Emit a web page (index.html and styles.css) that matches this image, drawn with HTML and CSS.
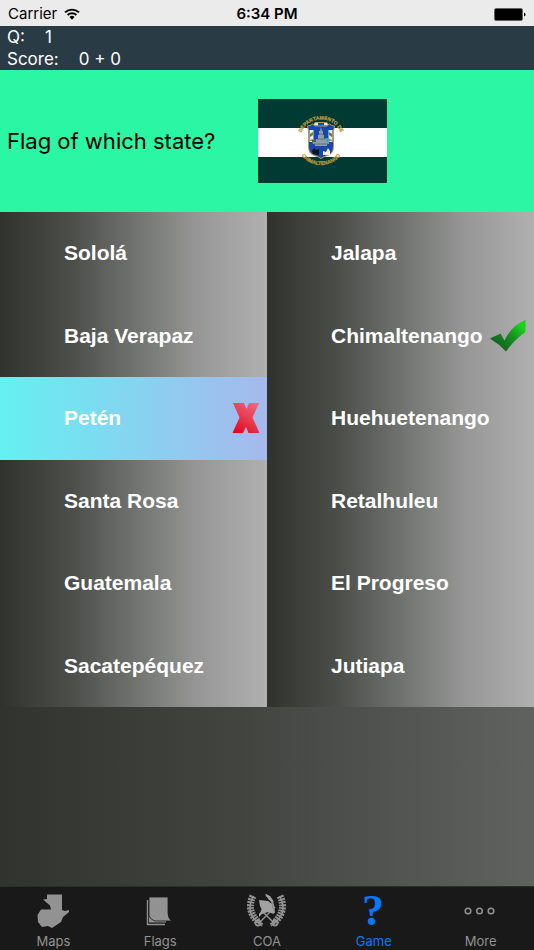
FILE: index.html
```html
<!DOCTYPE html>
<html lang="en">
<head>
<meta charset="utf-8">
<meta name="viewport" content="width=device-width, initial-scale=1">
<title>Flag Game</title>
<link rel="stylesheet" href="styles.css">
</head>
<body>
<div class="app">
  <header class="status">
    <div class="carrier">
      <span>Carrier</span>
      <svg class="wifi" viewBox="0 0 16 12" aria-hidden="true">
        <path d="M1 4.400a10.200 10.200 0 0 1 14 0M3.600 7a6.500 6.500 0 0 1 8.800 0" fill="none" stroke="#000" stroke-width="1.900"/>
        <path d="M5.500 9a3.700 3.700 0 0 1 5 0L8 11.700Z" fill="#000"/>
      </svg>
    </div>
    <time class="clock">6:34 PM</time>
    <svg class="battery" viewBox="0 0 32 13" aria-hidden="true">
      <rect x=".5" y=".5" width="28" height="12" rx="1.500" fill="#000" stroke="#555" stroke-width=".6"/>
      <path d="M30 4.500q1.600.5 1.600 2t-1.600 2Z" fill="#000"/>
    </svg>
  </header>

  <section class="score">
    <div class="score-line"><span>Q:</span><span>1</span></div>
    <div class="score-line"><span>Score:</span><span>0 + 0</span></div>
  </section>

  <main class="game">
    <section class="question">
      <h1 class="prompt">Flag of which state?</h1>
      <svg class="flag" viewBox="0 0 129 84" role="img" aria-label="State flag">
        <defs>
          <path id="arc-top" d="M41.500 42a21.500 21.500 0 0 1 43 0"/>
          <path id="arc-bottom" d="M38 41a25 25 0 0 0 50 0"/>
        </defs>
        <rect width="129" height="84" fill="#003a33"/>
        <rect y="29" width="129" height="29" fill="#fff"/>
        <path d="M57 23.500h12l2 3h-16Z" fill="#dfe3ec" stroke="#c5a03e" stroke-width=".8"/>
        <path d="M60 24h6v3h-6Z" fill="#2446ad"/>
        <path d="M49.500 27q3 0 5-2l3 2h11l3-2q2 2 5 2l-1 5v15q0 8-6 9.500-4 1-6.500 3-2.500-2-6.500-3-6-1.500-6-9.500V32Z" fill="#1747ad" stroke="#b9994f" stroke-width="1"/>
        <path d="M51.500 31h4v12h-4zM70.500 31h4v12h-4z" fill="#e7eadf"/>
        <path d="M52 35l3-2v3l-3 2zM71 33l3 2v3l-3-2z" fill="#5c7c42"/>
        <path d="M52 41l3-1v2h-3zM71 40l3 1v1h-3z" fill="#b88436"/>
        <path d="M54 41h5v4h-5z" fill="#3f7042"/>
        <ellipse cx="69" cy="41" rx="3" ry="2" fill="#3ba7b1"/>
        <path d="M63 28l1 4h1v4h1v4h2v3h3v2h-2v2h-12v-2h-2v-2h3v-3h2v-4h1v-4h1Z" fill="#929baa"/>
        <path d="M59 40h8M56 45h14M61 35h4" stroke="#5a6680" stroke-width=".8"/>
        <path d="M54 52l2-3 2 2 3-1v6l-6-1Z" fill="#101219"/>
        <path d="M65 56v-4l3 1 2-4 2 3v4Z" fill="#edf0f5"/>
        <text class="seal-text" text-anchor="middle"><textPath href="#arc-top" startOffset="50%">DEPARTAMENTO DE</textPath></text>
        <text class="seal-text" text-anchor="middle"><textPath href="#arc-bottom" startOffset="50%">CHIMALTENANGO</textPath></text>
      </svg>
    </section>

    <section class="answers" aria-label="Answers">
      <button class="answer" type="button">Sololá</button>
      <button class="answer" type="button">Jalapa</button>
      <button class="answer" type="button">Baja Verapaz</button>
      <button class="answer" type="button">Chimaltenango
        <svg class="mark mark-right" viewBox="0 0 38 34" aria-hidden="true">
          <defs><linearGradient id="green" x1="0" y1="1" x2="1" y2="0"><stop offset=".2" stop-color="#13651f"/><stop offset=".55" stop-color="#159022"/><stop offset=".85" stop-color="#18d51c"/></linearGradient></defs>
          <path d="M1 19.500l10.500-5 4 7Q23 6 36.500 1v12Q26 20 17 32.500Q10 25 1 19.500Z" fill="url(#green)"/>
        </svg>
      </button>
      <button class="answer answer-picked" type="button">Petén
        <svg class="mark mark-wrong" viewBox="0 0 28 30" aria-hidden="true">
          <defs><linearGradient id="red" x1=".8" y1="0" x2=".2" y2="1"><stop offset="0" stop-color="#ef6577"/><stop offset=".5" stop-color="#e73c51"/><stop offset="1" stop-color="#e4071f"/></linearGradient></defs>
          <path d="M1 0h11l2.500 6L17 0h10l-6.500 14.500L27.500 30H16.500L14 24l-3 6H.500L7.500 14.500Z" fill="url(#red)"/>
        </svg>
      </button>
      <button class="answer" type="button">Huehuetenango</button>
      <button class="answer" type="button">Santa Rosa</button>
      <button class="answer" type="button">Retalhuleu</button>
      <button class="answer" type="button">Guatemala</button>
      <button class="answer" type="button">El Progreso</button>
      <button class="answer" type="button">Sacatepéquez</button>
      <button class="answer" type="button">Jutiapa</button>
    </section>
  </main>

  <nav class="tabs">
    <a class="tab" href="#maps">
      <svg class="tab-icon" viewBox="0 0 40 36" aria-hidden="true">
        <path d="M14 1.500h15v15.500l3 1 4-1v2l-6 5-2 5-9 6-4-2-6 1-4-5-.5-7L8 16.500h10l-1-4-7-6 4-.5Z" fill="#929292"/>
      </svg>
      <span>Maps</span>
    </a>
    <a class="tab" href="#flags">
      <svg class="tab-icon" viewBox="0 0 40 36" aria-hidden="true">
        <path d="M7.500 7v24.500H25" fill="none" stroke="#929292" stroke-width="1.400"/>
        <path d="M9 25v4.500h17v-2H15q-4-1-6-5Z" fill="#929292"/>
        <path d="M9 4h19v16q0 5 3.500 8H15q-4-1-6-5Z" fill="#929292" stroke="#191919" stroke-width=".8"/>
      </svg>
      <span>Flags</span>
    </a>
    <a class="tab" href="#coa">
      <svg class="tab-icon" viewBox="0 0 40 36" aria-hidden="true">
        <g fill="none" stroke="#929292">
          <path d="M6.500 3Q-2 18 10 29l6 2M32.500 3Q41 18 29 29l-6 2" stroke-width="1.500"/>
          <path d="M6 3Q-1 17 11 29M33 3Q40 17 28 29" stroke-width="7" stroke-dasharray="1.900 1"/>
          <path d="M11 31L28 14M28 31L14 17M9 27l6 6M30 27l-6 6" stroke-width="1.500"/>
          <circle cx="11" cy="30" r="2.500" stroke-width="1.800"/>
          <circle cx="28" cy="30" r="2.500" stroke-width="1.800"/>
          <path d="M19 2q8 4 8 18" stroke-width="2"/>
        </g>
        <path d="M12 7l9 1 4 3 2 10-6-2-6 2-3 3v-3l3-4-2-4Z" fill="#a2a2a2"/>
        <path d="M18 1l5 2 4 6-5-2Z" fill="#a2a2a2"/>
      </svg>
      <span>COA</span>
    </a>
    <a class="tab tab-active" href="#game" aria-current="page">
      <svg class="tab-icon" viewBox="0 0 40 36" aria-hidden="true">
        <text class="tab-glyph" x="19" y="32" text-anchor="middle">?</text>
      </svg>
      <span>Game</span>
    </a>
    <a class="tab" href="#more">
      <svg class="tab-icon" viewBox="0 0 40 36" aria-hidden="true">
        <g fill="none" stroke="#929292" stroke-width="1.500"><circle cx="7" cy="18" r="2.800"/><circle cx="18.500" cy="18" r="2.800"/><circle cx="30" cy="18" r="2.800"/></g>
      </svg>
      <span>More</span>
    </a>
  </nav>
</div>
</body>
</html>
```
FILE: styles.css
```css
* { box-sizing: border-box; }

body {
  margin: 0;
  font-family: Inter, Roboto, "Liberation Sans", sans-serif;
}

.app {
  display: flex;
  flex-direction: column;
  min-height: 100vh;
  background: linear-gradient(90deg, #31332f, #424440 45%, #60625f);
}

.status {
  display: grid;
  grid-template-columns: 1fr auto 1fr;
  align-items: center;
  height: 26px;
  padding: 2px 8px 0;
  background: #ebebeb;
  color: #000;
  font-size: 15px;
  line-height: 20px;
}

.carrier {
  display: flex;
  align-items: center;
  gap: 7px;
}

.wifi { width: 16px; height: 12px; }
.clock { font-weight: 600; }
.battery { width: 32px; height: 13px; justify-self: end; }

.score {
  height: 44px;
  padding: 0 7px;
  background: #293b45;
  color: #fff;
  font-size: 17px;
  line-height: 22px;
}

.score-line { display: flex; gap: 20px; }

.game { flex: 1; }

.question {
  display: grid;
  grid-template-columns: 251px 1fr;
  align-items: center;
  height: 142px;
  padding: 0 7px;
  background: #2bf6a4;
}

.prompt {
  margin: 0;
  font-size: 22px;
  font-weight: 400;
  line-height: 28px;
}

.flag { width: 129px; height: 84px; }

.seal-text {
  fill: #b9953c;
  stroke: #b9953c;
  stroke-width: .3px;
  font: 700 5px "Liberation Sans", sans-serif;
}

.answers {
  display: grid;
  grid-template-columns: 1fr 1fr;
  grid-template-rows: repeat(6, 1fr);
  height: 495px;
}

.answer {
  position: relative;
  margin: 0;
  padding: 0 0 0 64px;
  border: 0;
  background: linear-gradient(90deg, #30322e, #4c4e4a 27%, #878986 65%, #959595 73%, #b0b0b0);
  color: #fff;
  font: 700 21px "Liberation Sans", Arial, sans-serif;
  text-align: left;
}

.answer-picked {
  background: linear-gradient(90deg, #64f0f1, #84d5f0 48%, #a7b8ed);
}

.mark {
  position: absolute;
  top: 50%;
  right: 7px;
  transform: translateY(-50%);
}

.mark-right { width: 38px; height: 34px; }
.mark-wrong { width: 28px; height: 30px; }

.tabs {
  display: grid;
  grid-template-columns: repeat(5, 1fr);
  height: 64px;
  border-top: 1px solid #2c2d2c;
  background: #191919;
}

.tab {
  display: flex;
  flex-direction: column;
  align-items: center;
  gap: 3px;
  padding-top: 6px;
  color: #929292;
  font-size: 13px;
  line-height: 18px;
  text-decoration: none;
}

.tab-icon { width: 40px; height: 36px; }
.tab-active { color: #007aff; }

.tab-glyph {
  fill: #007aff;
  font: 700 44px "Liberation Serif", serif;
}
```
